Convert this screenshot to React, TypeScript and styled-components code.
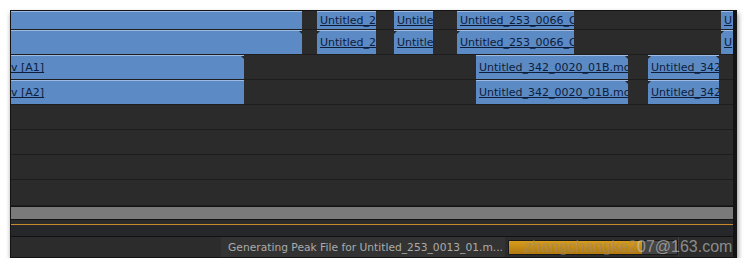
import React from 'react';
import styled, { createGlobalStyle, css } from 'styled-components';

const GlobalStyle = createGlobalStyle`
  html, body {
    margin: 0;
    padding: 0;
    background: #ffffff;
  }
  body {
    padding: 10px 0 0 10px;
    font-family: "DejaVu Sans", "Liberation Sans", sans-serif;
  }
`;

interface ClipData {
  left: number;
  width: number;
  label: string;
  pad?: number;
  notchL?: boolean;
  notchR?: boolean;
}

const Panel = styled.div`
  width: 722px;
  border: 1px solid #141414;
  border-right: 4px solid #141414;
  background: #2b2b2b;
  box-shadow: 1px 3px 5px rgba(0, 0, 0, 0.45);
  display: flex;
  flex-direction: column;
`;

const Track = styled.div<{ $h: number }>`
  position: relative;
  height: ${({ $h }) => $h}px;
  border-bottom: 1px solid #1e1e1e;
  background: #2b2b2b;
  overflow: hidden;
`;

const Clip = styled.div<{ $notchL?: boolean; $notchR?: boolean }>`
  position: absolute;
  top: 0;
  bottom: 0;
  box-sizing: border-box;
  background: #5c8ac4;
  border-top: 1px solid #9dbbe3;
  display: flex;
  align-items: center;
  overflow: hidden;

  ${({ $notchL }) =>
    $notchL &&
    css`
      &::before {
        content: '';
        position: absolute;
        top: -1px;
        left: 0;
        border-top: 4px solid #262626;
        border-right: 4px solid transparent;
      }
    `}
  ${({ $notchR }) =>
    $notchR &&
    css`
      &::after {
        content: '';
        position: absolute;
        top: -1px;
        right: 0;
        border-top: 4px solid #262626;
        border-left: 4px solid transparent;
      }
    `}
`;

const ClipLabel = styled.span`
  font-size: 11px;
  line-height: 13px;
  color: #0d1d3c;
  text-decoration: underline;
  white-space: nowrap;
`;

const ScrollBar = styled.div`
  height: 12px;
  background: #7a7a7a;
  border-top: 1px solid #121212;
  border-bottom: 1px solid #121212;
`;

const Gap = styled.div`
  height: 4px;
  background: #2a2a2a;
`;

const TimeLine = styled.div`
  height: 1px;
  background: #c98a2c;
`;

const Dock = styled.div`
  height: 11px;
  background: #25272a;
  border-bottom: 1px solid #111;
`;

const StatusBar = styled.div`
  position: relative;
  height: 20px;
  display: flex;
  align-items: center;
  background: #2c2c2c;
`;

const StatusText = styled.div`
  margin-left: auto;
  width: 284px;
  height: 100%;
  box-sizing: border-box;
  padding-right: 2px;
  background: #333333;
  display: flex;
  align-items: center;
  justify-content: flex-end;
  font-size: 10.7px;
  color: #ababab;
  white-space: nowrap;
  overflow: hidden;
`;

const Progress = styled.div`
  width: 170px;
  height: 15px;
  margin-left: 3px;
  box-sizing: border-box;
  border: 1px solid #1a1a1a;
  background: #444;
  display: flex;
`;

const ProgressFill = styled.div`
  height: 100%;
  background: linear-gradient(#d89d1c, #b07810);
`;

const StatusTail = styled.div`
  width: 55px;
  height: 100%;
  border-left: 1px solid #3e3e3e;
  box-sizing: border-box;
`;

const Watermark = styled.div`
  position: absolute;
  left: 513px;
  top: 2px;
  font-family: "Liberation Sans", Arial, sans-serif;
  font-size: 16px;
  line-height: 16px;
  white-space: nowrap;
  pointer-events: none;
`;

const MarkPart = styled.span<{ $faint?: boolean }>`
  color: ${({ $faint }) =>
    $faint ? 'rgba(150, 140, 120, 0.55)' : 'rgba(205, 205, 205, 0.6)'};
`;

const videoTop: ClipData[] = [
  { left: 0, width: 291, label: '' },
  { left: 306, width: 59, label: 'Untitled_2' },
  { left: 383, width: 39, label: 'Untitle' },
  { left: 446, width: 117, label: 'Untitled_253_0066_C' },
  { left: 710, width: 14, label: 'U' },
];

const videoBottom: ClipData[] = [
  { left: 0, width: 291, label: '', notchR: true },
  { left: 306, width: 59, label: 'Untitled_2', notchL: true },
  { left: 383, width: 39, label: 'Untitle', notchL: true },
  { left: 446, width: 117, label: 'Untitled_253_0066_C', notchL: true },
  { left: 710, width: 14, label: 'U', notchL: true },
];

const audioOne: ClipData[] = [
  { left: 0, width: 233, label: 'v [A1]', pad: 0, notchR: true },
  { left: 465, width: 152, label: 'Untitled_342_0020_01B.mov', notchR: true },
  { left: 637, width: 71, label: 'Untitled_342', notchL: true, notchR: true },
];

const audioTwo: ClipData[] = [
  { left: 0, width: 233, label: 'v [A2]', pad: 0 },
  { left: 465, width: 152, label: 'Untitled_342_0020_01B.mov', notchR: true },
  { left: 637, width: 71, label: 'Untitled_342', notchL: true },
];

const TrackRow = ({ clips, height }: { clips: ClipData[]; height: number }) => (
  <Track $h={height}>
    {clips.map((c, i) => (
      <Clip
        key={i}
        $notchL={c.notchL}
        $notchR={c.notchR}
        style={{ left: c.left, width: c.width, paddingLeft: c.pad ?? 3 }}
      >
        {c.label && <ClipLabel>{c.label}</ClipLabel>}
      </Clip>
    ))}
  </Track>
);

export default function App() {
  const progress = 0.79;
  return (
    <>
      <GlobalStyle />
      <Panel>
        <TrackRow clips={videoTop} height={18} />
        <TrackRow clips={videoBottom} height={24} />
        <TrackRow clips={audioOne} height={24} />
        <TrackRow clips={audioTwo} height={24} />
        <TrackRow clips={[]} height={24} />
        <TrackRow clips={[]} height={24} />
        <TrackRow clips={[]} height={24} />
        <TrackRow clips={[]} height={25} />
        <ScrollBar />
        <Gap />
        <TimeLine />
        <Dock />
        <StatusBar>
          <StatusText>Generating Peak File for Untitled_253_0013_01.m...</StatusText>
          <Progress>
            <ProgressFill style={{ width: `${progress * 100}%` }} />
          </Progress>
          <StatusTail />
          <Watermark>
            <MarkPart $faint>zhangchangke2</MarkPart>
            <MarkPart>07@163.com</MarkPart>
          </Watermark>
        </StatusBar>
      </Panel>
    </>
  );
}
